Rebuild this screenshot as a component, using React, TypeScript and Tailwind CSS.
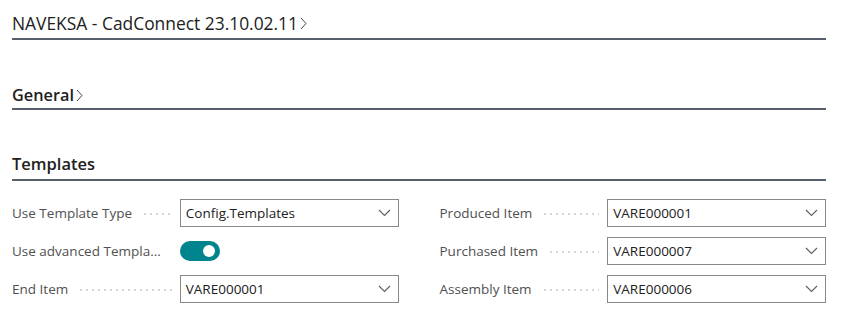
import React from "react";

const font = { fontFamily: '"Segoe UI", "Open Sans", "Noto Sans", sans-serif' };

function Chevron({ className = "" }: { className?: string }) {
  return (
    <svg width="7" height="13" viewBox="0 0 7 13" className={className} fill="none">
      <path d="M1 1l5 5.5L1 12" stroke="#444" strokeWidth="1" />
    </svg>
  );
}

function Down() {
  return (
    <svg width="13" height="8" viewBox="0 0 13 8" fill="none">
      <path d="M1 1l5.5 5.5L12 1" stroke="#605e5c" strokeWidth="1.1" />
    </svg>
  );
}

function Select({ value }: { value: string }) {
  return (
    <div className="w-[219px] h-[28px] border border-[#8a8886] flex items-center justify-between pl-[5px] pr-[7px] text-[13.5px] text-[#212121]">
      <span>{value}</span>
      <Down />
    </div>
  );
}

function Toggle() {
  return (
    <div className="h-[28px] flex items-center">
      <div className="w-[40px] h-[20px] rounded-full bg-[#00848d] flex items-center justify-end pr-[5px]">
        <div className="w-[12px] h-[12px] rounded-full bg-white" />
      </div>
    </div>
  );
}

function Row({ label, children }: { label: string; children: React.ReactNode }) {
  return (
    <div className="flex items-center h-[28px]">
      <div className="w-[168px] flex items-center pr-[8px]">
        <span className="text-[13.5px] text-[#505050] whitespace-nowrap">{label}</span>
        <div className="flex-1 ml-[12px] h-[2px] mt-[2px] bg-[linear-gradient(to_right,#d6d6d6_2px,transparent_2px)] bg-[length:6px_2px] bg-repeat-x" />
      </div>
      {children}
    </div>
  );
}

export default function App() {
  return (
    <div className="w-[845px] h-[329px] bg-white overflow-hidden" style={font}>
      <div className="ml-[12px] w-[814px]">
        <div className="h-[40px] pt-[11px] border-b-2 border-[#565f6b] flex items-start">
          <span className="text-[17.4px] leading-[24px] font-medium text-[#212121]">NAVEKSA - CadConnect 23.10.02.11</span>
          <Chevron className="ml-[2px] mt-[6px]" />
        </div>
        <div className="mt-[43px] h-[27px] border-b-2 border-[#565f6b] flex items-start">
          <span className="text-[16.3px] leading-[24px] font-semibold text-[#212121]">General</span>
          <Chevron className="ml-[2px] mt-[6px]" />
        </div>
        <div className="mt-[42px] h-[29px] border-b-2 border-[#565f6b] flex items-start">
          <span className="text-[16.5px] leading-[24px] font-semibold text-[#212121]">Templates</span>
        </div>
        <div className="mt-[18px] grid grid-cols-2 gap-x-[41px]">
          <div className="flex flex-col gap-[10px]">
            <Row label="Use Template Type"><Select value="Config.Templates" /></Row>
            <Row label="Use advanced Templa..."><Toggle /></Row>
            <Row label="End Item"><Select value="VARE000001" /></Row>
          </div>
          <div className="flex flex-col gap-[10px]">
            <Row label="Produced Item"><Select value="VARE000001" /></Row>
            <Row label="Purchased Item"><Select value="VARE000007" /></Row>
            <Row label="Assembly Item"><Select value="VARE000006" /></Row>
          </div>
        </div>
      </div>
    </div>
  );
}
